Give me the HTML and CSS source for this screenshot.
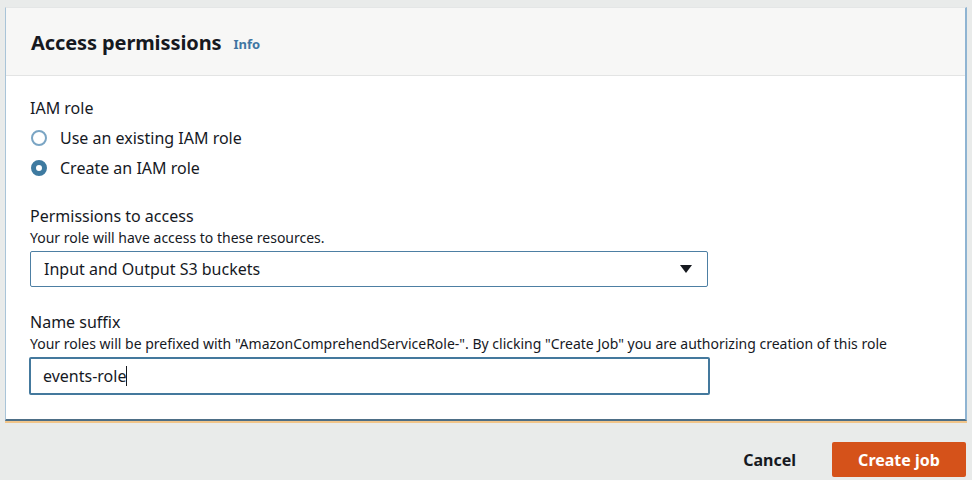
FILE: index.html
```html
<!DOCTYPE html>
<html lang="en">
<head>
<meta charset="utf-8">
<title>Access permissions</title>
<link rel="stylesheet" href="styles.css">
</head>
<body>
<div class="page">
  <section class="card">
    <header class="card-header">
      <h2 class="title">Access permissions</h2>
      <a class="info" href="#">Info</a>
    </header>
    <div class="card-body">
      <div class="field field-radio">
        <div class="label">IAM role</div>
        <label class="radio"><span class="dot"></span><span>Use an existing IAM role</span></label>
        <label class="radio"><span class="dot checked"></span><span>Create an IAM role</span></label>
      </div>
      <div class="field field-select">
        <div class="label">Permissions to access</div>
        <div class="desc">Your role will have access to these resources.</div>
        <div class="select">
          <span>Input and Output S3 buckets</span>
          <svg class="caret" width="14" height="10" viewBox="0 0 14 10"><path d="M1 1h12L7 9z" fill="#16191f"/></svg>
        </div>
      </div>
      <div class="field">
        <div class="label">Name suffix</div>
        <div class="desc">Your roles will be prefixed with "AmazonComprehendServiceRole-". By clicking "Create Job" you are authorizing creation of this role</div>
        <div class="input"><span>events-role</span><span class="cursor"></span></div>
      </div>
    </div>
  </section>
  <div class="actions">
    <button class="btn-link">Cancel</button>
    <button class="btn-primary">Create job</button>
  </div>
</div>
</body>
</html>
```

FILE: styles.css
```css
* { box-sizing: border-box; }
html, body { margin: 0; padding: 0; }
body {
  background: #e9ebea;
  font-family: "Noto Sans", "Open Sans", sans-serif;
  color: #16191f;
  width: 972px;
  height: 480px;
  overflow: hidden;
}
.page { padding: 7px 5px 0 5px; }
.card {
  background: #fff;
  border-left: 1px solid #a9c4d8;
  border-right: 2px solid #8fb4d2;
  border-top: 1px solid #e4e6e6;
  border-bottom: 2px solid #4d6e86;
  box-shadow: 0 2px 0 #f1c58a;
  width: 962px;
  height: 414px;
}
.card-header {
  background: #f7f7f6;
  height: 68px;
  border-bottom: 1px solid #e3e4e4;
  display: flex;
  align-items: center;
  padding: 2px 0 0 25px;
}
.title {
  margin: 0;
  font-size: 20px;
  font-weight: 700;
  letter-spacing: -0.1px;
}
.info {
  margin-left: 12px;
  margin-top: 3px;
  font-size: 13px;
  font-weight: 700;
  color: #3f76a2;
  text-decoration: none;
}
.card-body { padding: 22px 25px 0 24px; }
.field-radio { margin-bottom: 23px; }
.field-select { margin-bottom: 25px; }
.label { font-size: 16px; line-height: 20px; }
.desc { font-size: 14px; line-height: 18px; margin-top: 3px; }
.radio {
  display: flex;
  align-items: center;
  font-size: 16px;
  height: 30px;
}
.radio:first-of-type { margin-top: 5px; }
.dot {
  width: 16px; height: 16px;
  border-radius: 50%;
  border: 2px solid #7aa5c4;
  margin-right: 13px;
  margin-left: 1px;
  flex: none;
}
.dot.checked {
  border: 5px solid #3e7aa0;
  background: #fff;
}
.select {
  margin-top: 4px;
  width: 678px;
  height: 36px;
  border: 1px solid #4d7fa3;
  border-radius: 2px;
  display: flex;
  align-items: center;
  justify-content: space-between;
  padding: 0 14px 0 13px;
  font-size: 16px;
}
.input {
  margin-top: 4px;
  margin-left: -1px;
  width: 681px;
  height: 38px;
  border: 2px solid #44799d;
  border-radius: 2px;
  display: flex;
  align-items: center;
  padding: 0 12px;
  font-size: 16px;
}
.cursor {
  display: inline-block;
  width: 1px;
  height: 20px;
  background: #16191f;
}
.actions {
  display: flex;
  justify-content: flex-end;
  align-items: center;
  padding-top: 21px;
  padding-right: 1px;
}
.btn-link {
  background: none;
  border: none;
  font-family: inherit;
  font-size: 16px;
  font-weight: 700;
  color: #16191f;
  margin-right: 36px;
  padding: 0;
}
.btn-primary {
  background: #d5521a;
  color: #fff;
  border: none;
  border-radius: 2px;
  font-family: inherit;
  font-size: 16px;
  font-weight: 700;
  width: 134px;
  height: 35px;
  padding: 0;
}
```
